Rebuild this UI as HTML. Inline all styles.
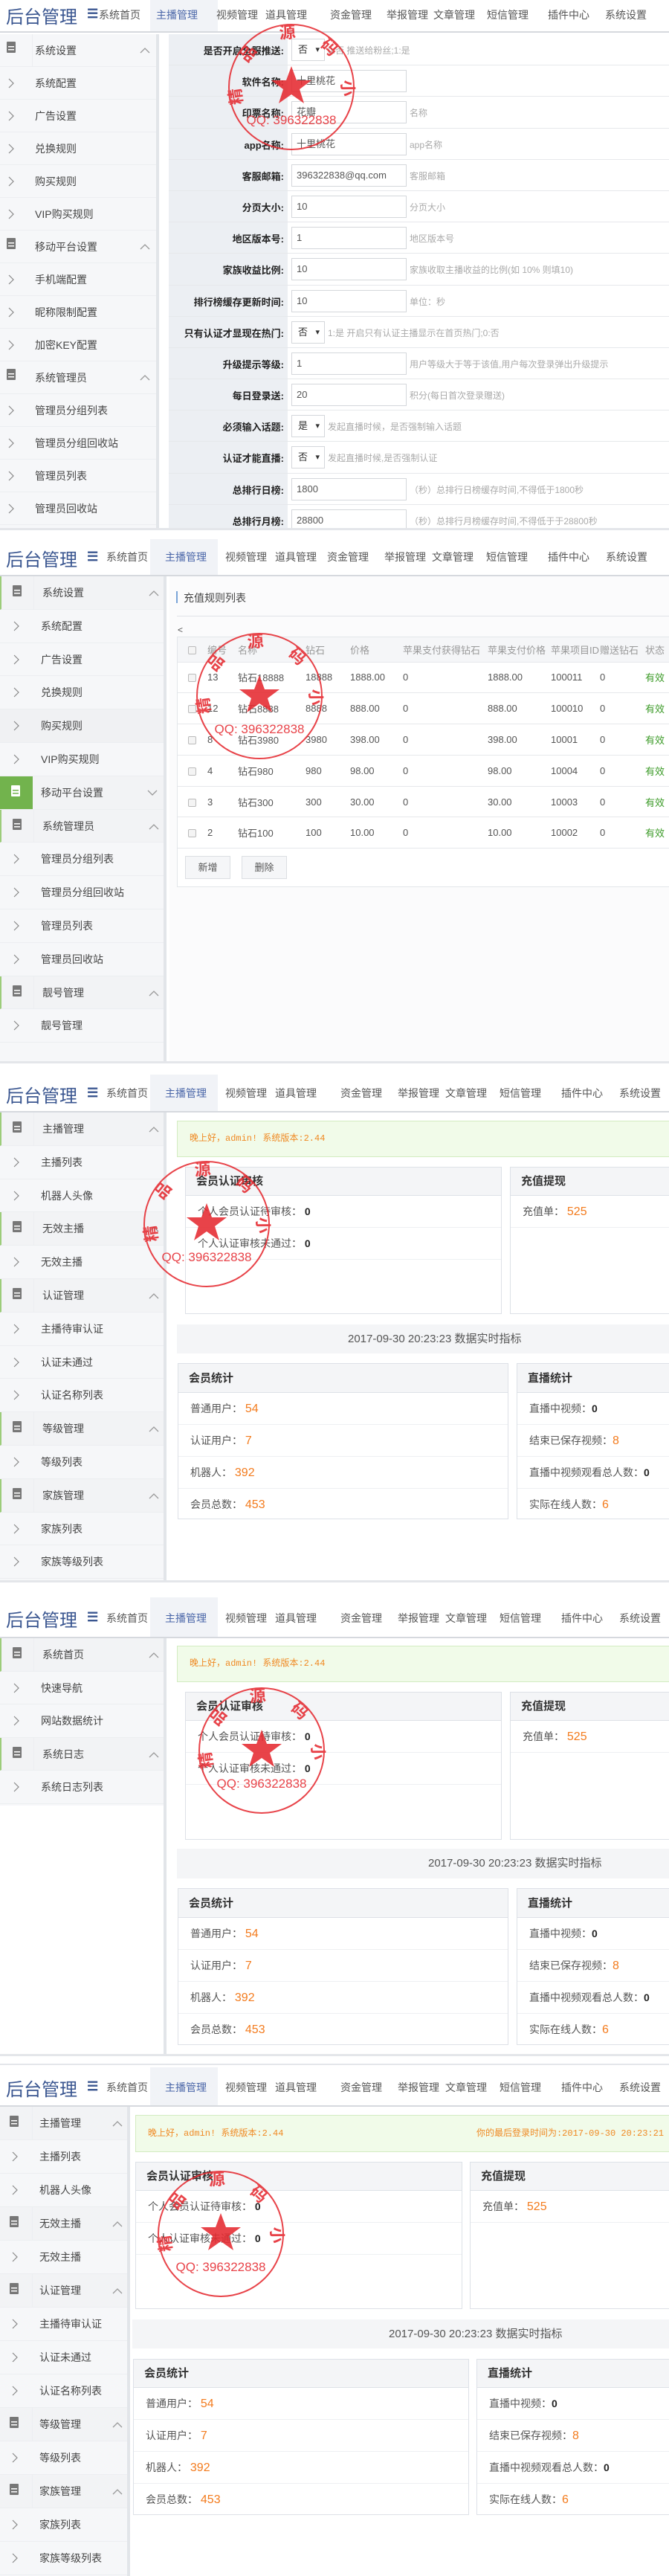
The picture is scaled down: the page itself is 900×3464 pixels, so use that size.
<!DOCTYPE html>
<html><head><meta charset="utf-8">
<style>
*{margin:0;padding:0;box-sizing:border-box}
body{width:900px;height:3464px;background:#fff;position:relative;overflow:hidden;font-family:"Liberation Sans","Noto Sans CJK SC",sans-serif;color:#444}
.p{position:absolute;left:0;width:900px;overflow:hidden;background:#fff;border-bottom:3px solid #e4e6ea}
.hd{position:absolute;left:0;top:0;width:900px;border-bottom:2px solid #d6d9de;background:#fff}
.hd .lg{position:absolute;left:8px;font-size:24px;color:#3a5690;letter-spacing:0px}
.hd .mn{position:absolute;left:117px;font-size:17px;color:#3a5690;font-weight:bold}
.hd .n{position:absolute;font-size:14px;color:#555;white-space:nowrap}
.hd .act{position:absolute;left:202px;width:91px;background:#f1f3f7}
.hd .a{color:#4a66a8}
.sb{position:absolute;left:0;background:#f6f7f9;border-right:4px solid #e2e5e9}
.it{position:relative;border-bottom:1px solid #eceef1;font-size:14px;color:#444;white-space:nowrap}
.it .t{position:absolute;left:55px}
.it .ic{position:absolute;left:0;top:0;bottom:0;width:44px;border-right:1px solid #eceef1}
.g{border-left:2px solid #9ccc7a;background:#f2f3f5}
.ct{position:absolute;background:#fff}
.card{position:absolute;border:1px solid #dde1e7;background:#fff}
.card .h{background:#f4f5f7;border-bottom:1px solid #dde1e7;font-size:15px;color:#333;padding-left:14px;font-weight:bold}
.card .r{border-bottom:1px solid #eef0f2;font-size:14px;color:#555;padding-left:16px}
.o{color:#f37b1d;font-size:16px}
.k{color:#222;font-weight:bold}
.al{position:absolute;background:#f1fbe9;border:1px solid #d3ecc1;font-size:12px;color:#f08a24;font-family:"Liberation Mono","Noto Sans CJK SC",monospace}
.db{position:absolute;background:#f4f5f7;font-size:15px;color:#555;text-align:center}
.stamp{position:absolute;width:180px;height:180px;opacity:.88}
table{border-collapse:collapse}
</style></head><body>

<!-- ================= PANEL 1 ================= -->
<div class="p" style="top:0;height:713px">
 <div class="hd" style="height:44px">
  <div class="act" style="top:0;height:42px"></div>
  <div class="lg" style="top:3px">后台管理</div>
  <div class="mn" style="top:9px">☰</div>
  <span class="n" style="left:133px;top:10px">系统首页</span>
  <span class="n a" style="left:210px;top:10px">主播管理</span>
  <span class="n" style="left:291px;top:10px">视频管理</span>
  <span class="n" style="left:357px;top:10px">道具管理</span>
  <span class="n" style="left:444px;top:10px">资金管理</span>
  <span class="n" style="left:520px;top:10px">举报管理</span>
  <span class="n" style="left:583px;top:10px">文章管理</span>
  <span class="n" style="left:655px;top:10px">短信管理</span>
  <span class="n" style="left:737px;top:10px">插件中心</span>
  <span class="n" style="left:814px;top:10px">系统设置</span>
 </div>
 <div class="sb" style="top:46px;width:214px;height:670px" id="sb1">
  <div class="it" style="height:44px;line-height:44px"><span class="ic"><svg width="44" height="44"><rect x="9" y="10" width="12" height="15" rx="1" fill="#777"/><rect x="11" y="16" width="8" height="1.5" fill="#fff"/><rect x="11" y="20" width="8" height="1.5" fill="#fff"/></svg></span><span class="t" style="left:47px">系统设置</span><svg style="position:absolute;left:188px;top:17px" width="14" height="9"><polyline points="1,8 7,2 13,8" fill="none" stroke="#999" stroke-width="1.3"/></svg></div>
  <div class="it" style="height:44px;line-height:44px"><svg style="position:absolute;left:11px;top:15px" width="8" height="14"><polyline points="1,1 7,7 1,13" fill="none" stroke="#888" stroke-width="1.2"/></svg><span class="t" style="left:47px">系统配置</span></div>
  <div class="it" style="height:44px;line-height:44px"><svg style="position:absolute;left:11px;top:15px" width="8" height="14"><polyline points="1,1 7,7 1,13" fill="none" stroke="#888" stroke-width="1.2"/></svg><span class="t" style="left:47px">广告设置</span></div>
  <div class="it" style="height:44px;line-height:44px"><svg style="position:absolute;left:11px;top:15px" width="8" height="14"><polyline points="1,1 7,7 1,13" fill="none" stroke="#888" stroke-width="1.2"/></svg><span class="t" style="left:47px">兑换规则</span></div>
  <div class="it" style="height:44px;line-height:44px"><svg style="position:absolute;left:11px;top:15px" width="8" height="14"><polyline points="1,1 7,7 1,13" fill="none" stroke="#888" stroke-width="1.2"/></svg><span class="t" style="left:47px">购买规则</span></div>
  <div class="it" style="height:44px;line-height:44px"><svg style="position:absolute;left:11px;top:15px" width="8" height="14"><polyline points="1,1 7,7 1,13" fill="none" stroke="#888" stroke-width="1.2"/></svg><span class="t" style="left:47px">VIP购买规则</span></div>
  <div class="it" style="height:44px;line-height:44px"><svg style="position:absolute;left:0;top:0" width="44" height="44"><rect x="9" y="10" width="12" height="15" rx="1" fill="#777"/><rect x="11" y="16" width="8" height="1.5" fill="#fff"/><rect x="11" y="20" width="8" height="1.5" fill="#fff"/></svg><span class="t" style="left:47px">移动平台设置</span><svg style="position:absolute;left:188px;top:17px" width="14" height="9"><polyline points="1,8 7,2 13,8" fill="none" stroke="#999" stroke-width="1.3"/></svg></div>
  <div class="it" style="height:44px;line-height:44px"><svg style="position:absolute;left:11px;top:15px" width="8" height="14"><polyline points="1,1 7,7 1,13" fill="none" stroke="#888" stroke-width="1.2"/></svg><span class="t" style="left:47px">手机端配置</span></div>
  <div class="it" style="height:44px;line-height:44px"><svg style="position:absolute;left:11px;top:15px" width="8" height="14"><polyline points="1,1 7,7 1,13" fill="none" stroke="#888" stroke-width="1.2"/></svg><span class="t" style="left:47px">昵称限制配置</span></div>
  <div class="it" style="height:44px;line-height:44px"><svg style="position:absolute;left:11px;top:15px" width="8" height="14"><polyline points="1,1 7,7 1,13" fill="none" stroke="#888" stroke-width="1.2"/></svg><span class="t" style="left:47px">加密KEY配置</span></div>
  <div class="it" style="height:44px;line-height:44px"><svg style="position:absolute;left:0;top:0" width="44" height="44"><rect x="9" y="10" width="12" height="15" rx="1" fill="#777"/><rect x="11" y="16" width="8" height="1.5" fill="#fff"/><rect x="11" y="20" width="8" height="1.5" fill="#fff"/></svg><span class="t" style="left:47px">系统管理员</span><svg style="position:absolute;left:188px;top:17px" width="14" height="9"><polyline points="1,8 7,2 13,8" fill="none" stroke="#999" stroke-width="1.3"/></svg></div>
  <div class="it" style="height:44px;line-height:44px"><svg style="position:absolute;left:11px;top:15px" width="8" height="14"><polyline points="1,1 7,7 1,13" fill="none" stroke="#888" stroke-width="1.2"/></svg><span class="t" style="left:47px">管理员分组列表</span></div>
  <div class="it" style="height:44px;line-height:44px"><svg style="position:absolute;left:11px;top:15px" width="8" height="14"><polyline points="1,1 7,7 1,13" fill="none" stroke="#888" stroke-width="1.2"/></svg><span class="t" style="left:47px">管理员分组回收站</span></div>
  <div class="it" style="height:44px;line-height:44px"><svg style="position:absolute;left:11px;top:15px" width="8" height="14"><polyline points="1,1 7,7 1,13" fill="none" stroke="#888" stroke-width="1.2"/></svg><span class="t" style="left:47px">管理员列表</span></div>
  <div class="it" style="height:44px;line-height:44px"><svg style="position:absolute;left:11px;top:15px" width="8" height="14"><polyline points="1,1 7,7 1,13" fill="none" stroke="#888" stroke-width="1.2"/></svg><span class="t" style="left:47px">管理员回收站</span></div>
 </div>
 <div style="position:absolute;left:227px;top:46px;width:160px;height:670px;background:#eceff3"></div>
 <div style="position:absolute;left:227px;top:46px;width:673px;font-size:13px">
  <style>
   .fr{position:relative;height:42.2px;border-bottom:1px solid #e6e8eb}
   .fr .l{position:absolute;left:0;width:155px;text-align:right;top:12px;color:#222;font-weight:bold;white-space:nowrap}
   .fr .in{position:absolute;left:165px;top:6px;width:155px;height:30px;border:1px solid #d4d7db;background:#fff;padding-left:6px;line-height:28px;color:#555;font-size:13px}
   .fr .se{position:absolute;left:165px;top:6px;width:45px;height:30px;border:1px solid #d4d7db;background:#fff;padding-left:8px;line-height:28px;color:#333}
   .fr .se:after{content:"▾";position:absolute;right:6px;top:0;font-size:11px}
   .fr .hn{position:absolute;left:324px;top:13px;color:#aaa;font-size:12px;white-space:nowrap}
   .fr .hs{left:214px}
  </style>
  <div class="fr"><span class="l">是否开启全服推送:</span><span class="se">否</span><span class="hn hs">0:否 推送给粉丝;1:是</span></div>
  <div class="fr"><span class="l">软件名称:</span><span class="in">十里桃花</span></div>
  <div class="fr"><span class="l">印票名称:</span><span class="in">花瓣</span><span class="hn">名称</span></div>
  <div class="fr"><span class="l">app名称:</span><span class="in">十里桃花</span><span class="hn">app名称</span></div>
  <div class="fr"><span class="l">客服邮箱:</span><span class="in">396322838@qq.com</span><span class="hn">客服邮箱</span></div>
  <div class="fr"><span class="l">分页大小:</span><span class="in">10</span><span class="hn">分页大小</span></div>
  <div class="fr"><span class="l">地区版本号:</span><span class="in">1</span><span class="hn">地区版本号</span></div>
  <div class="fr"><span class="l">家族收益比例:</span><span class="in">10</span><span class="hn">家族收取主播收益的比例(如 10% 则填10)</span></div>
  <div class="fr"><span class="l">排行榜缓存更新时间:</span><span class="in">10</span><span class="hn">单位：秒</span></div>
  <div class="fr"><span class="l">只有认证才显现在热门:</span><span class="se">否</span><span class="hn hs">1:是 开启只有认证主播显示在首页热门;0:否</span></div>
  <div class="fr"><span class="l">升级提示等级:</span><span class="in">1</span><span class="hn">用户等级大于等于该值,用户每次登录弹出升级提示</span></div>
  <div class="fr"><span class="l">每日登录送:</span><span class="in">20</span><span class="hn">积分(每日首次登录赠送)</span></div>
  <div class="fr"><span class="l">必须输入话题:</span><span class="se">是</span><span class="hn hs">发起直播时候，是否强制输入话题</span></div>
  <div class="fr"><span class="l">认证才能直播:</span><span class="se">否</span><span class="hn hs">发起直播时候,是否强制认证</span></div>
  <div class="fr"><span class="l">总排行日榜:</span><span class="in">1800</span><span class="hn">（秒）总排行日榜缓存时间,不得低于1800秒</span></div>
  <div class="fr"><span class="l">总排行月榜:</span><span class="in">28800</span><span class="hn">（秒）总排行月榜缓存时间,不得低于于28800秒</span></div>
 </div>
 <svg class="stamp" style="left:302px;top:27px" viewBox="-90 -90 180 180"><circle r="84" fill="none" stroke="#e52a30" stroke-width="2"/><path id="a1" d="M -62,30 A 68 68 0 1 1 62,30" fill="none"/><text font-size="22" font-weight="bold" fill="#e52a30" font-family="Noto Sans CJK SC,sans-serif"><textPath href="#a1" startOffset="3%" textLength="300" lengthAdjust="spacing">精 品 源 码 小 店</textPath></text><polygon points="0,-28 7,-9 27,-9 11,3 17,22 0,10 -17,22 -11,3 -27,-9 -7,-9" fill="#e52a30"/><text y="50" text-anchor="middle" font-size="17" fill="#e52a30" font-family="Liberation Sans Narrow,Liberation Sans,sans-serif">QQ: 396322838</text></svg>
</div>

<!-- ================= PANEL 2 ================= -->
<div class="p" style="top:722px;height:708px">
 <div class="hd" style="height:53px">
  <div class="act" style="top:3px;height:48px"></div>
  <div class="lg" style="top:11px">后台管理</div>
  <div class="mn" style="top:17px">☰</div>
  <span class="n" style="left:143px;top:17px">系统首页</span>
  <span class="n a" style="left:222px;top:17px">主播管理</span>
  <span class="n" style="left:303px;top:17px">视频管理</span>
  <span class="n" style="left:370px;top:17px">道具管理</span>
  <span class="n" style="left:440px;top:17px">资金管理</span>
  <span class="n" style="left:517px;top:17px">举报管理</span>
  <span class="n" style="left:581px;top:17px">文章管理</span>
  <span class="n" style="left:654px;top:17px">短信管理</span>
  <span class="n" style="left:737px;top:17px">插件中心</span>
  <span class="n" style="left:815px;top:17px">系统设置</span>
 </div>
 <div class="sb" style="top:53px;width:224px;height:660px">
  <div class="it g" style="height:44.8px;line-height:44.8px"><svg class="ic" width="44" height="44"><rect x="15" y="12" width="12" height="15" rx="1" fill="#777"/><rect x="17" y="18" width="8" height="1.5" fill="#fff"/><rect x="17" y="22" width="8" height="1.5" fill="#fff"/></svg><span class="t">系统设置</span><svg style="position:absolute;left:198px;top:18px" width="14" height="9"><polyline points="1,8 7,2 13,8" fill="none" stroke="#999" stroke-width="1.3"/></svg></div>
  <div class="it" style="height:44.8px;line-height:44.8px"><svg style="position:absolute;left:18px;top:15px" width="8" height="14"><polyline points="1,1 7,7 1,13" fill="none" stroke="#888" stroke-width="1.2"/></svg><span class="t">系统配置</span></div>
  <div class="it" style="height:44.8px;line-height:44.8px"><svg style="position:absolute;left:18px;top:15px" width="8" height="14"><polyline points="1,1 7,7 1,13" fill="none" stroke="#888" stroke-width="1.2"/></svg><span class="t">广告设置</span></div>
  <div class="it" style="height:44.8px;line-height:44.8px"><svg style="position:absolute;left:18px;top:15px" width="8" height="14"><polyline points="1,1 7,7 1,13" fill="none" stroke="#888" stroke-width="1.2"/></svg><span class="t">兑换规则</span></div>
  <div class="it" style="height:44.8px;line-height:44.8px;background:#f0f1f3"><svg style="position:absolute;left:18px;top:15px" width="8" height="14"><polyline points="1,1 7,7 1,13" fill="none" stroke="#888" stroke-width="1.2"/></svg><span class="t">购买规则</span></div>
  <div class="it" style="height:44.8px;line-height:44.8px"><svg style="position:absolute;left:18px;top:15px" width="8" height="14"><polyline points="1,1 7,7 1,13" fill="none" stroke="#888" stroke-width="1.2"/></svg><span class="t">VIP购买规则</span></div>
  <div class="it" style="height:44.8px;line-height:44.8px;background:#f2f3f5"><div style="position:absolute;left:0;top:0;width:44px;height:44px;background:#72b34d"></div><svg style="position:absolute;left:0;top:0" width="44" height="44"><rect x="15" y="12" width="12" height="15" rx="1" fill="#fff"/><rect x="17" y="18" width="8" height="1.5" fill="#72b34d"/><rect x="17" y="22" width="8" height="1.5" fill="#72b34d"/></svg><span class="t">移动平台设置</span><svg style="position:absolute;left:198px;top:18px" width="14" height="9"><polyline points="1,1 7,7 13,1" fill="none" stroke="#999" stroke-width="1.3"/></svg></div>
  <div class="it g" style="height:44.8px;line-height:44.8px"><svg class="ic" width="44" height="44"><rect x="15" y="12" width="12" height="15" rx="1" fill="#777"/><rect x="17" y="18" width="8" height="1.5" fill="#fff"/><rect x="17" y="22" width="8" height="1.5" fill="#fff"/></svg><span class="t">系统管理员</span><svg style="position:absolute;left:198px;top:18px" width="14" height="9"><polyline points="1,8 7,2 13,8" fill="none" stroke="#999" stroke-width="1.3"/></svg></div>
  <div class="it" style="height:44.8px;line-height:44.8px"><svg style="position:absolute;left:18px;top:15px" width="8" height="14"><polyline points="1,1 7,7 1,13" fill="none" stroke="#888" stroke-width="1.2"/></svg><span class="t">管理员分组列表</span></div>
  <div class="it" style="height:44.8px;line-height:44.8px"><svg style="position:absolute;left:18px;top:15px" width="8" height="14"><polyline points="1,1 7,7 1,13" fill="none" stroke="#888" stroke-width="1.2"/></svg><span class="t">管理员分组回收站</span></div>
  <div class="it" style="height:44.8px;line-height:44.8px"><svg style="position:absolute;left:18px;top:15px" width="8" height="14"><polyline points="1,1 7,7 1,13" fill="none" stroke="#888" stroke-width="1.2"/></svg><span class="t">管理员列表</span></div>
  <div class="it" style="height:44.8px;line-height:44.8px"><svg style="position:absolute;left:18px;top:15px" width="8" height="14"><polyline points="1,1 7,7 1,13" fill="none" stroke="#888" stroke-width="1.2"/></svg><span class="t">管理员回收站</span></div>
  <div class="it g" style="height:44.8px;line-height:44.8px"><svg class="ic" width="44" height="44"><rect x="15" y="12" width="12" height="15" rx="1" fill="#777"/><rect x="17" y="18" width="8" height="1.5" fill="#fff"/><rect x="17" y="22" width="8" height="1.5" fill="#fff"/></svg><span class="t">靓号管理</span><svg style="position:absolute;left:198px;top:18px" width="14" height="9"><polyline points="1,8 7,2 13,8" fill="none" stroke="#999" stroke-width="1.3"/></svg></div>
  <div class="it" style="height:44.8px;line-height:44.8px"><svg style="position:absolute;left:18px;top:15px" width="8" height="14"><polyline points="1,1 7,7 1,13" fill="none" stroke="#888" stroke-width="1.2"/></svg><span class="t">靓号管理</span></div>
 </div>
 <div style="position:absolute;left:228px;top:53px;width:672px;height:660px;background:#fbfbfc"></div>
 <div style="position:absolute;left:237px;top:73px;width:2px;height:16px;background:#7aa4d8"></div>
 <div style="position:absolute;left:247px;top:72px;font-size:14px;color:#444">充值规则列表</div>
 <div style="position:absolute;left:238px;top:106px;width:662px;height:1px;background:#e0e3e7"></div>
 <div style="position:absolute;left:239px;top:118px;font-size:12px;color:#555">&lt;</div>
 <div style="position:absolute;left:238px;top:134px;width:670px;height:337px;border:1px solid #e3e6ea;background:#fff;font-size:13px;color:#555">
  <style>
   .tb td{height:41.8px;border-bottom:1px solid #e6e8eb;white-space:nowrap;padding:0}
   .tb tr.th td{height:33px;background:#f5f6f8;color:#999}
   .cb{display:inline-block;width:11px;height:11px;border:1px solid #bbb;border-radius:2px;background:#f4f4f4;vertical-align:middle}
   .ok{color:#3c9b28}
  </style>
  <table class="tb" style="width:664px">
   <tr class="th"><td style="width:40px;padding-left:14px"><span class="cb"></span></td><td style="width:41px">编号</td><td style="width:91px">名称</td><td style="width:60px">钻石</td><td style="width:71px">价格</td><td style="width:114px">苹果支付获得钻石</td><td style="width:85px">苹果支付价格</td><td style="width:66px">苹果项目ID</td><td style="width:61px">赠送钻石</td><td>状态</td></tr>
   <tr><td style="padding-left:14px"><span class="cb"></span></td><td>13</td><td>钻石18888</td><td>18888</td><td>1888.00</td><td>0</td><td>1888.00</td><td>100011</td><td>0</td><td class="ok">有效</td></tr>
   <tr><td style="padding-left:14px"><span class="cb"></span></td><td>12</td><td>钻石8888</td><td>8888</td><td>888.00</td><td>0</td><td>888.00</td><td>100010</td><td>0</td><td class="ok">有效</td></tr>
   <tr><td style="padding-left:14px"><span class="cb"></span></td><td>8</td><td>钻石3980</td><td>3980</td><td>398.00</td><td>0</td><td>398.00</td><td>10001</td><td>0</td><td class="ok">有效</td></tr>
   <tr><td style="padding-left:14px"><span class="cb"></span></td><td>4</td><td>钻石980</td><td>980</td><td>98.00</td><td>0</td><td>98.00</td><td>10004</td><td>0</td><td class="ok">有效</td></tr>
   <tr><td style="padding-left:14px"><span class="cb"></span></td><td>3</td><td>钻石300</td><td>300</td><td>30.00</td><td>0</td><td>30.00</td><td>10003</td><td>0</td><td class="ok">有效</td></tr>
   <tr><td style="padding-left:14px"><span class="cb"></span></td><td>2</td><td>钻石100</td><td>100</td><td>10.00</td><td>0</td><td>10.00</td><td>10002</td><td>0</td><td class="ok">有效</td></tr>
  </table>
  <div style="position:absolute;left:10px;top:294px;width:61px;height:31px;border:1px solid #dcdfe3;background:#f5f6f8;text-align:center;line-height:29px;color:#555">新增</div>
  <div style="position:absolute;left:86px;top:294px;width:61px;height:31px;border:1px solid #dcdfe3;background:#f5f6f8;text-align:center;line-height:29px;color:#555">删除</div>
 </div>
 <svg class="stamp" style="left:259px;top:124px" viewBox="-90 -90 180 180"><circle r="84" fill="none" stroke="#e52a30" stroke-width="2"/><path id="a2" d="M -62,30 A 68 68 0 1 1 62,30" fill="none"/><text font-size="22" font-weight="bold" fill="#e52a30" font-family="Noto Sans CJK SC,sans-serif"><textPath href="#a2" startOffset="3%" textLength="300" lengthAdjust="spacing">精 品 源 码 小 店</textPath></text><polygon points="0,-28 7,-9 27,-9 11,3 17,22 0,10 -17,22 -11,3 -27,-9 -7,-9" fill="#e52a30"/><text y="50" text-anchor="middle" font-size="17" fill="#e52a30" font-family="Liberation Sans,sans-serif">QQ: 396322838</text></svg>
</div>

<!-- ================= PANEL 3 ================= -->
<div class="p" style="top:1442px;height:686px">
 <div class="hd" style="height:54px">
  <div class="act" style="top:3px;height:49px"></div>
  <div class="lg" style="top:12px">后台管理</div>
  <div class="mn" style="top:18px">☰</div>
  <span class="n" style="left:143px;top:18px">系统首页</span>
  <span class="n a" style="left:222px;top:18px">主播管理</span>
  <span class="n" style="left:303px;top:18px">视频管理</span>
  <span class="n" style="left:370px;top:18px">道具管理</span>
  <span class="n" style="left:458px;top:18px">资金管理</span>
  <span class="n" style="left:535px;top:18px">举报管理</span>
  <span class="n" style="left:599px;top:18px">文章管理</span>
  <span class="n" style="left:672px;top:18px">短信管理</span>
  <span class="n" style="left:755px;top:18px">插件中心</span>
  <span class="n" style="left:833px;top:18px">系统设置</span>
 </div>
 <div class="sb" style="top:54px;width:224px;height:640px">
  <div class="it g" style="height:44.8px;line-height:44.8px"><svg class="ic" width="44" height="44"><rect x="15" y="12" width="12" height="15" rx="1" fill="#777"/><rect x="17" y="18" width="8" height="1.5" fill="#fff"/><rect x="17" y="22" width="8" height="1.5" fill="#fff"/></svg><span class="t">主播管理</span><svg style="position:absolute;left:198px;top:18px" width="14" height="9"><polyline points="1,8 7,2 13,8" fill="none" stroke="#999" stroke-width="1.3"/></svg></div>
  <div class="it" style="height:44.8px;line-height:44.8px"><svg style="position:absolute;left:18px;top:15px" width="8" height="14"><polyline points="1,1 7,7 1,13" fill="none" stroke="#888" stroke-width="1.2"/></svg><span class="t">主播列表</span></div>
  <div class="it" style="height:44.8px;line-height:44.8px"><svg style="position:absolute;left:18px;top:15px" width="8" height="14"><polyline points="1,1 7,7 1,13" fill="none" stroke="#888" stroke-width="1.2"/></svg><span class="t">机器人头像</span></div>
  <div class="it g" style="height:44.8px;line-height:44.8px"><svg class="ic" width="44" height="44"><rect x="15" y="12" width="12" height="15" rx="1" fill="#777"/><rect x="17" y="18" width="8" height="1.5" fill="#fff"/><rect x="17" y="22" width="8" height="1.5" fill="#fff"/></svg><span class="t">无效主播</span><svg style="position:absolute;left:198px;top:18px" width="14" height="9"><polyline points="1,8 7,2 13,8" fill="none" stroke="#999" stroke-width="1.3"/></svg></div>
  <div class="it" style="height:44.8px;line-height:44.8px"><svg style="position:absolute;left:18px;top:15px" width="8" height="14"><polyline points="1,1 7,7 1,13" fill="none" stroke="#888" stroke-width="1.2"/></svg><span class="t">无效主播</span></div>
  <div class="it g" style="height:44.8px;line-height:44.8px"><svg class="ic" width="44" height="44"><rect x="15" y="12" width="12" height="15" rx="1" fill="#777"/><rect x="17" y="18" width="8" height="1.5" fill="#fff"/><rect x="17" y="22" width="8" height="1.5" fill="#fff"/></svg><span class="t">认证管理</span><svg style="position:absolute;left:198px;top:18px" width="14" height="9"><polyline points="1,8 7,2 13,8" fill="none" stroke="#999" stroke-width="1.3"/></svg></div>
  <div class="it" style="height:44.8px;line-height:44.8px"><svg style="position:absolute;left:18px;top:15px" width="8" height="14"><polyline points="1,1 7,7 1,13" fill="none" stroke="#888" stroke-width="1.2"/></svg><span class="t">主播待审认证</span></div>
  <div class="it" style="height:44.8px;line-height:44.8px"><svg style="position:absolute;left:18px;top:15px" width="8" height="14"><polyline points="1,1 7,7 1,13" fill="none" stroke="#888" stroke-width="1.2"/></svg><span class="t">认证未通过</span></div>
  <div class="it" style="height:44.8px;line-height:44.8px"><svg style="position:absolute;left:18px;top:15px" width="8" height="14"><polyline points="1,1 7,7 1,13" fill="none" stroke="#888" stroke-width="1.2"/></svg><span class="t">认证名称列表</span></div>
  <div class="it g" style="height:44.8px;line-height:44.8px"><svg class="ic" width="44" height="44"><rect x="15" y="12" width="12" height="15" rx="1" fill="#777"/><rect x="17" y="18" width="8" height="1.5" fill="#fff"/><rect x="17" y="22" width="8" height="1.5" fill="#fff"/></svg><span class="t">等级管理</span><svg style="position:absolute;left:198px;top:18px" width="14" height="9"><polyline points="1,8 7,2 13,8" fill="none" stroke="#999" stroke-width="1.3"/></svg></div>
  <div class="it" style="height:44.8px;line-height:44.8px"><svg style="position:absolute;left:18px;top:15px" width="8" height="14"><polyline points="1,1 7,7 1,13" fill="none" stroke="#888" stroke-width="1.2"/></svg><span class="t">等级列表</span></div>
  <div class="it g" style="height:44.8px;line-height:44.8px"><svg class="ic" width="44" height="44"><rect x="15" y="12" width="12" height="15" rx="1" fill="#777"/><rect x="17" y="18" width="8" height="1.5" fill="#fff"/><rect x="17" y="22" width="8" height="1.5" fill="#fff"/></svg><span class="t">家族管理</span><svg style="position:absolute;left:198px;top:18px" width="14" height="9"><polyline points="1,8 7,2 13,8" fill="none" stroke="#999" stroke-width="1.3"/></svg></div>
  <div class="it" style="height:44.8px;line-height:44.8px"><svg style="position:absolute;left:18px;top:15px" width="8" height="14"><polyline points="1,1 7,7 1,13" fill="none" stroke="#888" stroke-width="1.2"/></svg><span class="t">家族列表</span></div>
  <div class="it" style="height:44.8px;line-height:44.8px"><svg style="position:absolute;left:18px;top:15px" width="8" height="14"><polyline points="1,1 7,7 1,13" fill="none" stroke="#888" stroke-width="1.2"/></svg><span class="t">家族等级列表</span></div>
 </div>
 <div class="al" style="left:238px;top:65px;width:670px;height:49px;line-height:47px;padding-left:16px">晚上好，admin! 系统版本:2.44</div>
 <div class="card" style="left:249px;top:127px;width:426px;height:198px"><div class="h" style="height:38px;line-height:38px">会员认证审核</div><div class="r" style="height:43px;line-height:43px">个人会员认证待审核： <span class="k">0</span></div><div class="r" style="height:43px;line-height:43px">个人认证审核未通过： <span class="k">0</span></div></div>
 <div class="card" style="left:686px;top:127px;width:220px;height:198px"><div class="h" style="height:38px;line-height:38px">充值提现</div><div class="r" style="height:43px;line-height:43px">充值单： <span class="o">525</span></div></div>
 <div class="db" style="left:238px;top:339px;width:662px;height:39px;line-height:39px;padding-left:230px;text-align:left">2017-09-30 20:23:23 数据实时指标</div>
 <div class="card" style="left:239px;top:391px;width:445px;height:210px"><div class="h" style="height:39px;line-height:39px">会员统计</div><div class="r" style="height:43px;line-height:43px">普通用户： <span class="o">54</span></div><div class="r" style="height:43px;line-height:43px">认证用户： <span class="o">7</span></div><div class="r" style="height:43px;line-height:43px">机器人： <span class="o">392</span></div><div class="r" style="height:42px;line-height:42px;border:0">会员总数： <span class="o">453</span></div></div>
 <div class="card" style="left:695px;top:391px;width:215px;height:210px"><div class="h" style="height:39px;line-height:39px">直播统计</div><div class="r" style="height:43px;line-height:43px">直播中视频：<span class="k">0</span></div><div class="r" style="height:43px;line-height:43px">结束已保存视频：<span class="o">8</span></div><div class="r" style="height:43px;line-height:43px">直播中视频观看总人数：<span class="k">0</span></div><div class="r" style="height:42px;line-height:42px;border:0">实际在线人数：<span class="o">6</span></div></div>
 <svg class="stamp" style="left:188px;top:114px" viewBox="-90 -90 180 180"><circle r="84" fill="none" stroke="#e52a30" stroke-width="2"/><path id="a3" d="M -62,30 A 68 68 0 1 1 62,30" fill="none"/><text font-size="22" font-weight="bold" fill="#e52a30" font-family="Noto Sans CJK SC,sans-serif"><textPath href="#a3" startOffset="3%" textLength="300" lengthAdjust="spacing">精 品 源 码 小 店</textPath></text><polygon points="0,-28 7,-9 27,-9 11,3 17,22 0,10 -17,22 -11,3 -27,-9 -7,-9" fill="#e52a30"/><text y="50" text-anchor="middle" font-size="17" fill="#e52a30" font-family="Liberation Sans,sans-serif">QQ: 396322838</text></svg>
</div>

<!-- ================= PANEL 4 ================= -->
<div class="p" style="top:2145px;height:620px">
 <div class="hd" style="height:58px">
  <div class="act" style="top:3px;height:53px"></div>
  <div class="lg" style="top:14px">后台管理</div>
  <div class="mn" style="top:20px">☰</div>
  <span class="n" style="left:143px;top:21px">系统首页</span>
  <span class="n a" style="left:222px;top:21px">主播管理</span>
  <span class="n" style="left:303px;top:21px">视频管理</span>
  <span class="n" style="left:370px;top:21px">道具管理</span>
  <span class="n" style="left:458px;top:21px">资金管理</span>
  <span class="n" style="left:535px;top:21px">举报管理</span>
  <span class="n" style="left:599px;top:21px">文章管理</span>
  <span class="n" style="left:672px;top:21px">短信管理</span>
  <span class="n" style="left:755px;top:21px">插件中心</span>
  <span class="n" style="left:833px;top:21px">系统设置</span>
 </div>
 <div style="position:absolute;left:220px;top:58px;width:4px;height:570px;background:#e2e5e9"></div>
 <div class="sb" style="top:58px;width:224px;height:225px">
  <div class="it g" style="height:44.5px;line-height:44.5px"><svg class="ic" width="44" height="44"><rect x="15" y="12" width="12" height="15" rx="1" fill="#777"/><rect x="17" y="18" width="8" height="1.5" fill="#fff"/><rect x="17" y="22" width="8" height="1.5" fill="#fff"/></svg><span class="t">系统首页</span><svg style="position:absolute;left:198px;top:18px" width="14" height="9"><polyline points="1,8 7,2 13,8" fill="none" stroke="#999" stroke-width="1.3"/></svg></div>
  <div class="it" style="height:44.5px;line-height:44.5px"><svg style="position:absolute;left:18px;top:15px" width="8" height="14"><polyline points="1,1 7,7 1,13" fill="none" stroke="#888" stroke-width="1.2"/></svg><span class="t">快速导航</span></div>
  <div class="it" style="height:44.5px;line-height:44.5px"><svg style="position:absolute;left:18px;top:15px" width="8" height="14"><polyline points="1,1 7,7 1,13" fill="none" stroke="#888" stroke-width="1.2"/></svg><span class="t">网站数据统计</span></div>
  <div class="it g" style="height:44.5px;line-height:44.5px"><svg class="ic" width="44" height="44"><rect x="15" y="12" width="12" height="15" rx="1" fill="#777"/><rect x="17" y="18" width="8" height="1.5" fill="#fff"/><rect x="17" y="22" width="8" height="1.5" fill="#fff"/></svg><span class="t">系统日志</span><svg style="position:absolute;left:198px;top:18px" width="14" height="9"><polyline points="1,8 7,2 13,8" fill="none" stroke="#999" stroke-width="1.3"/></svg></div>
  <div class="it" style="height:44.5px;line-height:44.5px"><svg style="position:absolute;left:18px;top:15px" width="8" height="14"><polyline points="1,1 7,7 1,13" fill="none" stroke="#888" stroke-width="1.2"/></svg><span class="t">系统日志列表</span></div>
 </div>
 <div class="al" style="left:238px;top:68px;width:670px;height:49px;line-height:47px;padding-left:16px">晚上好，admin! 系统版本:2.44</div>
 <div class="card" style="left:249px;top:130px;width:426px;height:199px"><div class="h" style="height:38px;line-height:38px">会员认证审核</div><div class="r" style="height:43px;line-height:43px">个人会员认证待审核： <span class="k">0</span></div><div class="r" style="height:43px;line-height:43px">个人认证审核未通过： <span class="k">0</span></div></div>
 <div class="card" style="left:686px;top:130px;width:220px;height:199px"><div class="h" style="height:38px;line-height:38px">充值提现</div><div class="r" style="height:43px;line-height:43px">充值单： <span class="o">525</span></div></div>
 <div class="db" style="left:238px;top:341px;width:662px;height:40px;line-height:40px;padding-left:338px;text-align:left">2017-09-30 20:23:23 数据实时指标</div>
 <div class="card" style="left:239px;top:394px;width:445px;height:211px"><div class="h" style="height:39px;line-height:39px">会员统计</div><div class="r" style="height:43px;line-height:43px">普通用户： <span class="o">54</span></div><div class="r" style="height:43px;line-height:43px">认证用户： <span class="o">7</span></div><div class="r" style="height:43px;line-height:43px">机器人： <span class="o">392</span></div><div class="r" style="height:42px;line-height:42px;border:0">会员总数： <span class="o">453</span></div></div>
 <div class="card" style="left:695px;top:394px;width:215px;height:211px"><div class="h" style="height:39px;line-height:39px">直播统计</div><div class="r" style="height:43px;line-height:43px">直播中视频：<span class="k">0</span></div><div class="r" style="height:43px;line-height:43px">结束已保存视频：<span class="o">8</span></div><div class="r" style="height:43px;line-height:43px">直播中视频观看总人数：<span class="k">0</span></div><div class="r" style="height:42px;line-height:42px;border:0">实际在线人数：<span class="o">6</span></div></div>
 <svg class="stamp" style="left:262px;top:119px" viewBox="-90 -90 180 180"><circle r="84" fill="none" stroke="#e52a30" stroke-width="2"/><path id="a4" d="M -62,30 A 68 68 0 1 1 62,30" fill="none"/><text font-size="22" font-weight="bold" fill="#e52a30" font-family="Noto Sans CJK SC,sans-serif"><textPath href="#a4" startOffset="3%" textLength="300" lengthAdjust="spacing">精 品 源 码 小 店</textPath></text><polygon points="0,-28 7,-9 27,-9 11,3 17,22 0,10 -17,22 -11,3 -27,-9 -7,-9" fill="#e52a30"/><text y="50" text-anchor="middle" font-size="17" fill="#e52a30" font-family="Liberation Sans,sans-serif">QQ: 396322838</text></svg>
</div>

<!-- ================= PANEL 5 ================= -->
<div class="p" style="top:2775px;height:689px;border-bottom:0;border-top:2px solid #e4e6ea">
 <div class="hd" style="height:56px">
  <div class="act" style="top:3px;height:51px"></div>
  <div class="lg" style="top:13px">后台管理</div>
  <div class="mn" style="top:19px">☰</div>
  <span class="n" style="left:143px;top:20px">系统首页</span>
  <span class="n a" style="left:222px;top:20px">主播管理</span>
  <span class="n" style="left:303px;top:20px">视频管理</span>
  <span class="n" style="left:370px;top:20px">道具管理</span>
  <span class="n" style="left:458px;top:20px">资金管理</span>
  <span class="n" style="left:535px;top:20px">举报管理</span>
  <span class="n" style="left:599px;top:20px">文章管理</span>
  <span class="n" style="left:672px;top:20px">短信管理</span>
  <span class="n" style="left:755px;top:20px">插件中心</span>
  <span class="n" style="left:833px;top:20px">系统设置</span>
 </div>
 <div class="sb" style="top:56px;width:175px;height:640px">
  <div class="it" style="height:45px;line-height:45px;background:#f2f3f5"><svg class="ic" width="42" height="44"><rect x="13" y="12" width="12" height="15" rx="1" fill="#777"/><rect x="15" y="18" width="8" height="1.5" fill="#fff"/><rect x="15" y="22" width="8" height="1.5" fill="#fff"/></svg><span class="t" style="left:53px">主播管理</span><svg style="position:absolute;left:151px;top:18px" width="14" height="9"><polyline points="1,8 7,2 13,8" fill="none" stroke="#999" stroke-width="1.3"/></svg></div>
  <div class="it" style="height:45px;line-height:45px"><svg style="position:absolute;left:16px;top:15px" width="8" height="14"><polyline points="1,1 7,7 1,13" fill="none" stroke="#888" stroke-width="1.2"/></svg><span class="t" style="left:53px">主播列表</span></div>
  <div class="it" style="height:45px;line-height:45px"><svg style="position:absolute;left:16px;top:15px" width="8" height="14"><polyline points="1,1 7,7 1,13" fill="none" stroke="#888" stroke-width="1.2"/></svg><span class="t" style="left:53px">机器人头像</span></div>
  <div class="it" style="height:45px;line-height:45px;background:#f2f3f5"><svg class="ic" width="42" height="44"><rect x="13" y="12" width="12" height="15" rx="1" fill="#777"/><rect x="15" y="18" width="8" height="1.5" fill="#fff"/><rect x="15" y="22" width="8" height="1.5" fill="#fff"/></svg><span class="t" style="left:53px">无效主播</span><svg style="position:absolute;left:151px;top:18px" width="14" height="9"><polyline points="1,8 7,2 13,8" fill="none" stroke="#999" stroke-width="1.3"/></svg></div>
  <div class="it" style="height:45px;line-height:45px"><svg style="position:absolute;left:16px;top:15px" width="8" height="14"><polyline points="1,1 7,7 1,13" fill="none" stroke="#888" stroke-width="1.2"/></svg><span class="t" style="left:53px">无效主播</span></div>
  <div class="it" style="height:45px;line-height:45px;background:#f2f3f5"><svg class="ic" width="42" height="44"><rect x="13" y="12" width="12" height="15" rx="1" fill="#777"/><rect x="15" y="18" width="8" height="1.5" fill="#fff"/><rect x="15" y="22" width="8" height="1.5" fill="#fff"/></svg><span class="t" style="left:53px">认证管理</span><svg style="position:absolute;left:151px;top:18px" width="14" height="9"><polyline points="1,8 7,2 13,8" fill="none" stroke="#999" stroke-width="1.3"/></svg></div>
  <div class="it" style="height:45px;line-height:45px"><svg style="position:absolute;left:16px;top:15px" width="8" height="14"><polyline points="1,1 7,7 1,13" fill="none" stroke="#888" stroke-width="1.2"/></svg><span class="t" style="left:53px">主播待审认证</span></div>
  <div class="it" style="height:45px;line-height:45px"><svg style="position:absolute;left:16px;top:15px" width="8" height="14"><polyline points="1,1 7,7 1,13" fill="none" stroke="#888" stroke-width="1.2"/></svg><span class="t" style="left:53px">认证未通过</span></div>
  <div class="it" style="height:45px;line-height:45px"><svg style="position:absolute;left:16px;top:15px" width="8" height="14"><polyline points="1,1 7,7 1,13" fill="none" stroke="#888" stroke-width="1.2"/></svg><span class="t" style="left:53px">认证名称列表</span></div>
  <div class="it" style="height:45px;line-height:45px;background:#f2f3f5"><svg class="ic" width="42" height="44"><rect x="13" y="12" width="12" height="15" rx="1" fill="#777"/><rect x="15" y="18" width="8" height="1.5" fill="#fff"/><rect x="15" y="22" width="8" height="1.5" fill="#fff"/></svg><span class="t" style="left:53px">等级管理</span><svg style="position:absolute;left:151px;top:18px" width="14" height="9"><polyline points="1,8 7,2 13,8" fill="none" stroke="#999" stroke-width="1.3"/></svg></div>
  <div class="it" style="height:45px;line-height:45px"><svg style="position:absolute;left:16px;top:15px" width="8" height="14"><polyline points="1,1 7,7 1,13" fill="none" stroke="#888" stroke-width="1.2"/></svg><span class="t" style="left:53px">等级列表</span></div>
  <div class="it" style="height:45px;line-height:45px;background:#f2f3f5"><svg class="ic" width="42" height="44"><rect x="13" y="12" width="12" height="15" rx="1" fill="#777"/><rect x="15" y="18" width="8" height="1.5" fill="#fff"/><rect x="15" y="22" width="8" height="1.5" fill="#fff"/></svg><span class="t" style="left:53px">家族管理</span><svg style="position:absolute;left:151px;top:18px" width="14" height="9"><polyline points="1,8 7,2 13,8" fill="none" stroke="#999" stroke-width="1.3"/></svg></div>
  <div class="it" style="height:45px;line-height:45px"><svg style="position:absolute;left:16px;top:15px" width="8" height="14"><polyline points="1,1 7,7 1,13" fill="none" stroke="#888" stroke-width="1.2"/></svg><span class="t" style="left:53px">家族列表</span></div>
  <div class="it" style="height:45px;line-height:45px"><svg style="position:absolute;left:16px;top:15px" width="8" height="14"><polyline points="1,1 7,7 1,13" fill="none" stroke="#888" stroke-width="1.2"/></svg><span class="t" style="left:53px">家族等级列表</span></div>
 </div>
 <div class="al" style="left:182px;top:67px;width:726px;height:50px;line-height:48px;padding-left:16px">晚上好，admin! 系统版本:2.44<span style="position:absolute;right:14px;top:0">你的最后登录时间为:2017-09-30 20:23:21</span></div>
 <div class="card" style="left:182px;top:130px;width:440px;height:198px"><div class="h" style="height:38px;line-height:38px">会员认证审核</div><div class="r" style="height:43px;line-height:43px">个人会员认证待审核： <span class="k">0</span></div><div class="r" style="height:43px;line-height:43px">个人认证审核未通过： <span class="k">0</span></div></div>
 <div class="card" style="left:632px;top:130px;width:276px;height:198px"><div class="h" style="height:38px;line-height:38px">充值提现</div><div class="r" style="height:43px;line-height:43px">充值单： <span class="o">525</span></div></div>
 <div class="db" style="left:178px;top:342px;width:722px;height:39px;line-height:39px;padding-left:345px;text-align:left">2017-09-30 20:23:23 数据实时指标</div>
 <div class="card" style="left:179px;top:395px;width:452px;height:210px"><div class="h" style="height:38px;line-height:38px">会员统计</div><div class="r" style="height:43px;line-height:43px">普通用户： <span class="o">54</span></div><div class="r" style="height:43px;line-height:43px">认证用户： <span class="o">7</span></div><div class="r" style="height:43px;line-height:43px">机器人： <span class="o">392</span></div><div class="r" style="height:42px;line-height:42px;border:0">会员总数： <span class="o">453</span></div></div>
 <div class="card" style="left:641px;top:395px;width:267px;height:210px"><div class="h" style="height:38px;line-height:38px">直播统计</div><div class="r" style="height:43px;line-height:43px">直播中视频：<span class="k">0</span></div><div class="r" style="height:43px;line-height:43px">结束已保存视频：<span class="o">8</span></div><div class="r" style="height:43px;line-height:43px">直播中视频观看总人数：<span class="k">0</span></div><div class="r" style="height:42px;line-height:42px;border:0">实际在线人数：<span class="o">6</span></div></div>
 <svg class="stamp" style="left:207px;top:137px" viewBox="-90 -90 180 180"><circle r="84" fill="none" stroke="#e52a30" stroke-width="2"/><path id="a5" d="M -62,30 A 68 68 0 1 1 62,30" fill="none"/><text font-size="22" font-weight="bold" fill="#e52a30" font-family="Noto Sans CJK SC,sans-serif"><textPath href="#a5" startOffset="3%" textLength="300" lengthAdjust="spacing">精 品 源 码 小 店</textPath></text><polygon points="0,-28 7,-9 27,-9 11,3 17,22 0,10 -17,22 -11,3 -27,-9 -7,-9" fill="#e52a30"/><text y="50" text-anchor="middle" font-size="17" fill="#e52a30" font-family="Liberation Sans,sans-serif">QQ: 396322838</text></svg>
</div>

</body></html>
